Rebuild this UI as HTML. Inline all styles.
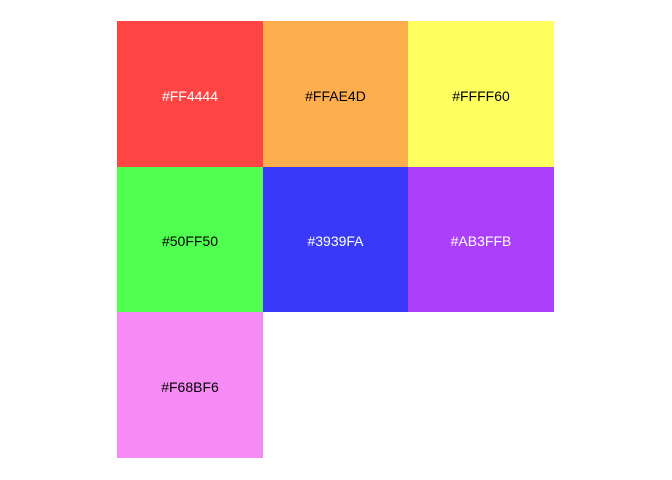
<!DOCTYPE html>
<html><head><style>
body{margin:0;width:672px;height:480px;background:#fff;position:relative;overflow:hidden;font-family:"Liberation Sans",sans-serif;font-size:14px}
.c{position:absolute;display:flex;align-items:center;justify-content:center;box-sizing:border-box;padding-top:3px}
</style></head><body>
<div class="c" style="left:117px;top:21px;width:146px;height:146px;background:#FF4444;color:#fff">#FF4444</div>
<div class="c" style="left:263px;top:21px;width:145px;height:146px;background:#FFAE4D;color:#000">#FFAE4D</div>
<div class="c" style="left:408px;top:21px;width:146px;height:146px;background:#FFFF60;color:#000">#FFFF60</div>
<div class="c" style="left:117px;top:167px;width:146px;height:145px;background:#50FF50;color:#000">#50FF50</div>
<div class="c" style="left:263px;top:167px;width:145px;height:145px;background:#3939FA;color:#fff">#3939FA</div>
<div class="c" style="left:408px;top:167px;width:146px;height:145px;background:#AB3FFB;color:#fff">#AB3FFB</div>
<div class="c" style="left:117px;top:312px;width:146px;height:146px;background:#F68BF6;color:#000">#F68BF6</div>
</body></html>
